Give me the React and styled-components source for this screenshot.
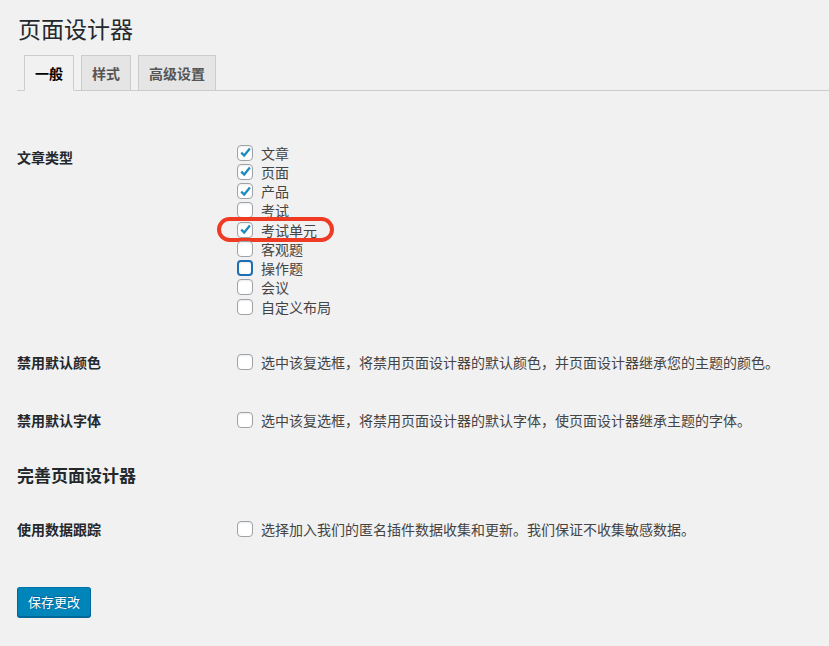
import React from "react";
import styled, { createGlobalStyle } from "styled-components";

const GlobalStyle = createGlobalStyle`
  html, body {
    margin: 0;
    background: #f1f1f1;
  }
  body {
    font-family: "Noto Sans CJK SC", "Liberation Sans", sans-serif;
    font-size: 14px;
    color: #444;
  }
`;

const Wrap = styled.div`
  padding: 0 0 40px 17px;
`;

const Title = styled.h1`
  margin: 0;
  padding: 13px 0 0 1px;
  font-size: 23px;
  font-weight: 400;
  line-height: 30px;
  color: #23282d;
`;

const TabBar = styled.nav`
  display: flex;
  margin-top: 12px;
  border-bottom: 1px solid #ccc;
`;

const Tab = styled.a`
  margin: 0 0 -1px 7px;
  padding: 5px 10px;
  font-size: 14px;
  font-weight: 600;
  line-height: 24px;
  border: 1px solid #ccc;
  border-bottom-color: ${({ $active }) => ($active ? "#f1f1f1" : "#ccc")};
  background: ${({ $active }) => ($active ? "#f1f1f1" : "#e5e5e5")};
  color: ${({ $active }) => ($active ? "#000" : "#555")};
  text-decoration: none;
  cursor: pointer;
`;

const Form = styled.div`
  margin-top: 37px;
`;

const Row = styled.div`
  display: grid;
  grid-template-columns: 220px 1fr;
`;

const Label = styled.div`
  padding: 20px 0;
  font-weight: 600;
  line-height: 18px;
  color: #23282d;
`;

const Field = styled.div`
  padding: ${({ $list }) => ($list ? "15px 0 17px" : "20px 0")};
  display: flex;
  flex-direction: column;
`;

const Option = styled.label`
  position: relative;
  display: flex;
  align-items: center;
  gap: 8px;
  height: ${({ $tight }) => ($tight ? "19.25px" : "18px")};
  color: #444;
`;

const Box = styled.span`
  flex: none;
  width: 16px;
  height: 16px;
  box-sizing: border-box;
  display: flex;
  align-items: center;
  justify-content: center;
  background: #fff;
  border-radius: 4px;
  border: ${({ $focus }) => ($focus ? "2px solid #1d6fb1" : "1px solid #9ea3a8")};
  box-shadow: inset 0 1px 2px rgba(0, 0, 0, 0.08);
`;

const Highlight = styled.span`
  position: absolute;
  left: -20px;
  top: -3px;
  width: 117px;
  height: 25px;
  box-sizing: border-box;
  border: 4px solid #ef3b24;
  border-radius: 13px;
  pointer-events: none;
`;

const Section = styled.h2`
  margin: 15px 0 14px;
  font-size: 17px;
  font-weight: 600;
  line-height: 22px;
  color: #23282d;
`;

const SaveButton = styled.button`
  margin-top: 29px;
  height: 30px;
  padding: 0 10px;
  font-family: inherit;
  font-size: 13px;
  line-height: 28px;
  color: #fff;
  background: #0085ba;
  border: 1px solid;
  border-color: #0073aa #006799 #006799;
  border-radius: 3px;
  box-shadow: 0 1px 0 #006799;
  text-shadow: 0 -1px 1px #006799, 1px 0 1px #006799;
  cursor: pointer;
`;

const Check = ({ checked, focus }) => (
  <Box $focus={focus}>
    {checked && (
      <svg width="13" height="13" viewBox="0 0 13 13">
        <path d="M2.2 6.6 L5.2 9.6 L10.9 2.6" fill="none" stroke="#1e8cbe" strokeWidth="2.3" />
      </svg>
    )}
  </Box>
);

const postTypes = [
  { name: "文章", checked: true },
  { name: "页面", checked: true },
  { name: "产品", checked: true },
  { name: "考试" },
  { name: "考试单元", checked: true, marked: true },
  { name: "客观题" },
  { name: "操作题", focus: true },
  { name: "会议" },
  { name: "自定义布局" },
];

const SingleRow = ({ label, text }) => (
  <Row>
    <Label>{label}</Label>
    <Field>
      <Option>
        <Check />
        {text}
      </Option>
    </Field>
  </Row>
);

export default function App() {
  return (
    <Wrap>
      <GlobalStyle />
      <Title>页面设计器</Title>
      <TabBar>
        <Tab $active>一般</Tab>
        <Tab>样式</Tab>
        <Tab>高级设置</Tab>
      </TabBar>

      <Form>
        <Row>
          <Label>文章类型</Label>
          <Field $list>
            {postTypes.map((t) => (
              <Option key={t.name} $tight>
                {t.marked && <Highlight />}
                <Check checked={t.checked} focus={t.focus} />
                {t.name}
              </Option>
            ))}
          </Field>
        </Row>
        <SingleRow
          label="禁用默认颜色"
          text="选中该复选框，将禁用页面设计器的默认颜色，并页面设计器继承您的主题的颜色。"
        />
        <SingleRow
          label="禁用默认字体"
          text="选中该复选框，将禁用页面设计器的默认字体，使页面设计器继承主题的字体。"
        />

        <Section>完善页面设计器</Section>

        <SingleRow
          label="使用数据跟踪"
          text="选择加入我们的匿名插件数据收集和更新。我们保证不收集敏感数据。"
        />
      </Form>

      <SaveButton>保存更改</SaveButton>
    </Wrap>
  );
}
